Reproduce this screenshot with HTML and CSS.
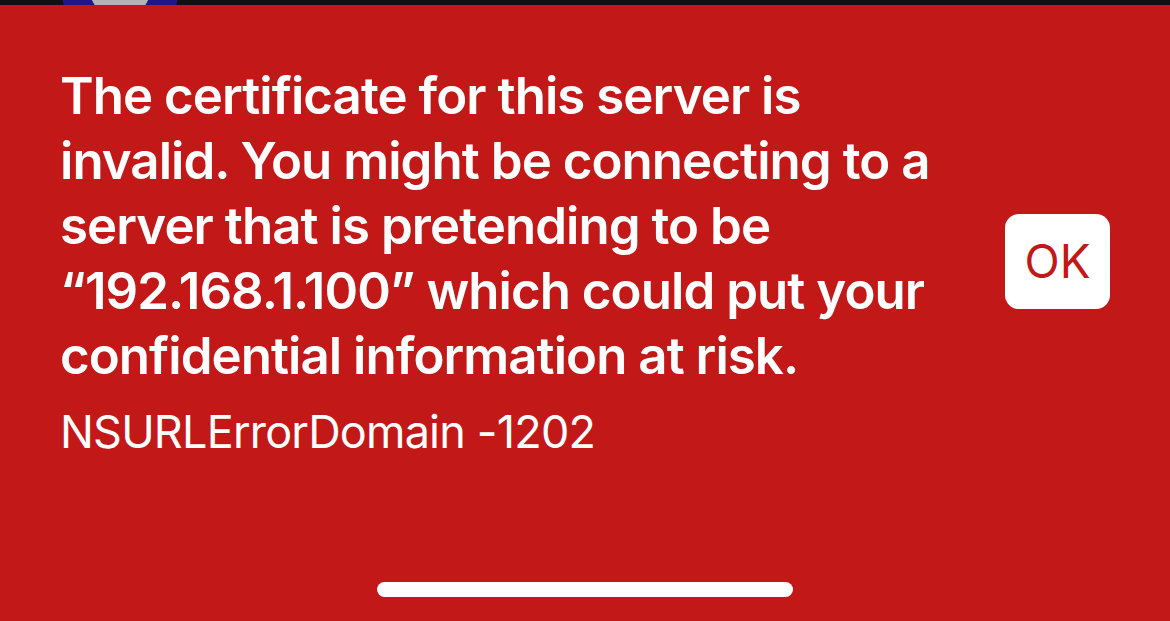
FILE: index.html
```html
<!DOCTYPE html>
<html lang="en">
<head>
  <meta charset="UTF-8">
  <meta name="viewport" content="width=device-width,initial-scale=1">
  <title>Certificate error</title>
  <link rel="stylesheet" href="styles.css">
</head>
<body>
  <!-- status strip, avatar peeking from above -->
  <div class="topbar">
    <span class="avatar"><span class="avatar-inner"></span></span>
  </div>

  <div class="alert">
    <div class="alert-text">
      <p class="message">The certificate for this server is<br>invalid. You might be connecting to a<br>server that is pretending to be<br>“192.168.1.100” which could put your<br>confidential information at risk.</p>
      <p class="code">NSURLErrorDomain -1202</p>
    </div>
    <button class="ok-btn">OK</button>
  </div>

  <div class="home-indicator"></div>
</body>
</html>
```

FILE: styles.css
```css
html, body { height: 100%; }
body { margin: 0; background: #c21818; color: #fff; font-family: Inter, "Noto Sans", sans-serif; position: relative; overflow: hidden; }
.topbar { height: 5px; background: #111; position: relative; overflow: hidden; }
.avatar { position: absolute; left: 61px; top: -72px; width: 118px; height: 118px; border-radius: 50%; background: #20168c; display: flex; align-items: center; justify-content: center; }
.avatar-inner { width: 62px; height: 62px; border-radius: 50%; background: #b3b3b3; }
.alert { display: flex; align-items: center; padding: 58px 60px 0 60px; }
.alert-text { flex: 1; }
.message { margin: 0; font-size: 51px; line-height: 65px; font-weight: 600; letter-spacing: -0.95px; white-space: nowrap; }
.code { margin: 17px 0 0; font-size: 45px; line-height: 54px; font-weight: 400; letter-spacing: -0.8px; }
.ok-btn { width: 105px; height: 95px; border: 0; border-radius: 14px; background: #fff; color: #c21818; font-family: inherit; font-size: 46px; font-weight: 400; padding: 0; cursor: pointer; }
.home-indicator { position: absolute; left: 50%; bottom: 24px; transform: translateX(-50%); width: 416px; height: 15px; border-radius: 8px; background: #fff; }
```
